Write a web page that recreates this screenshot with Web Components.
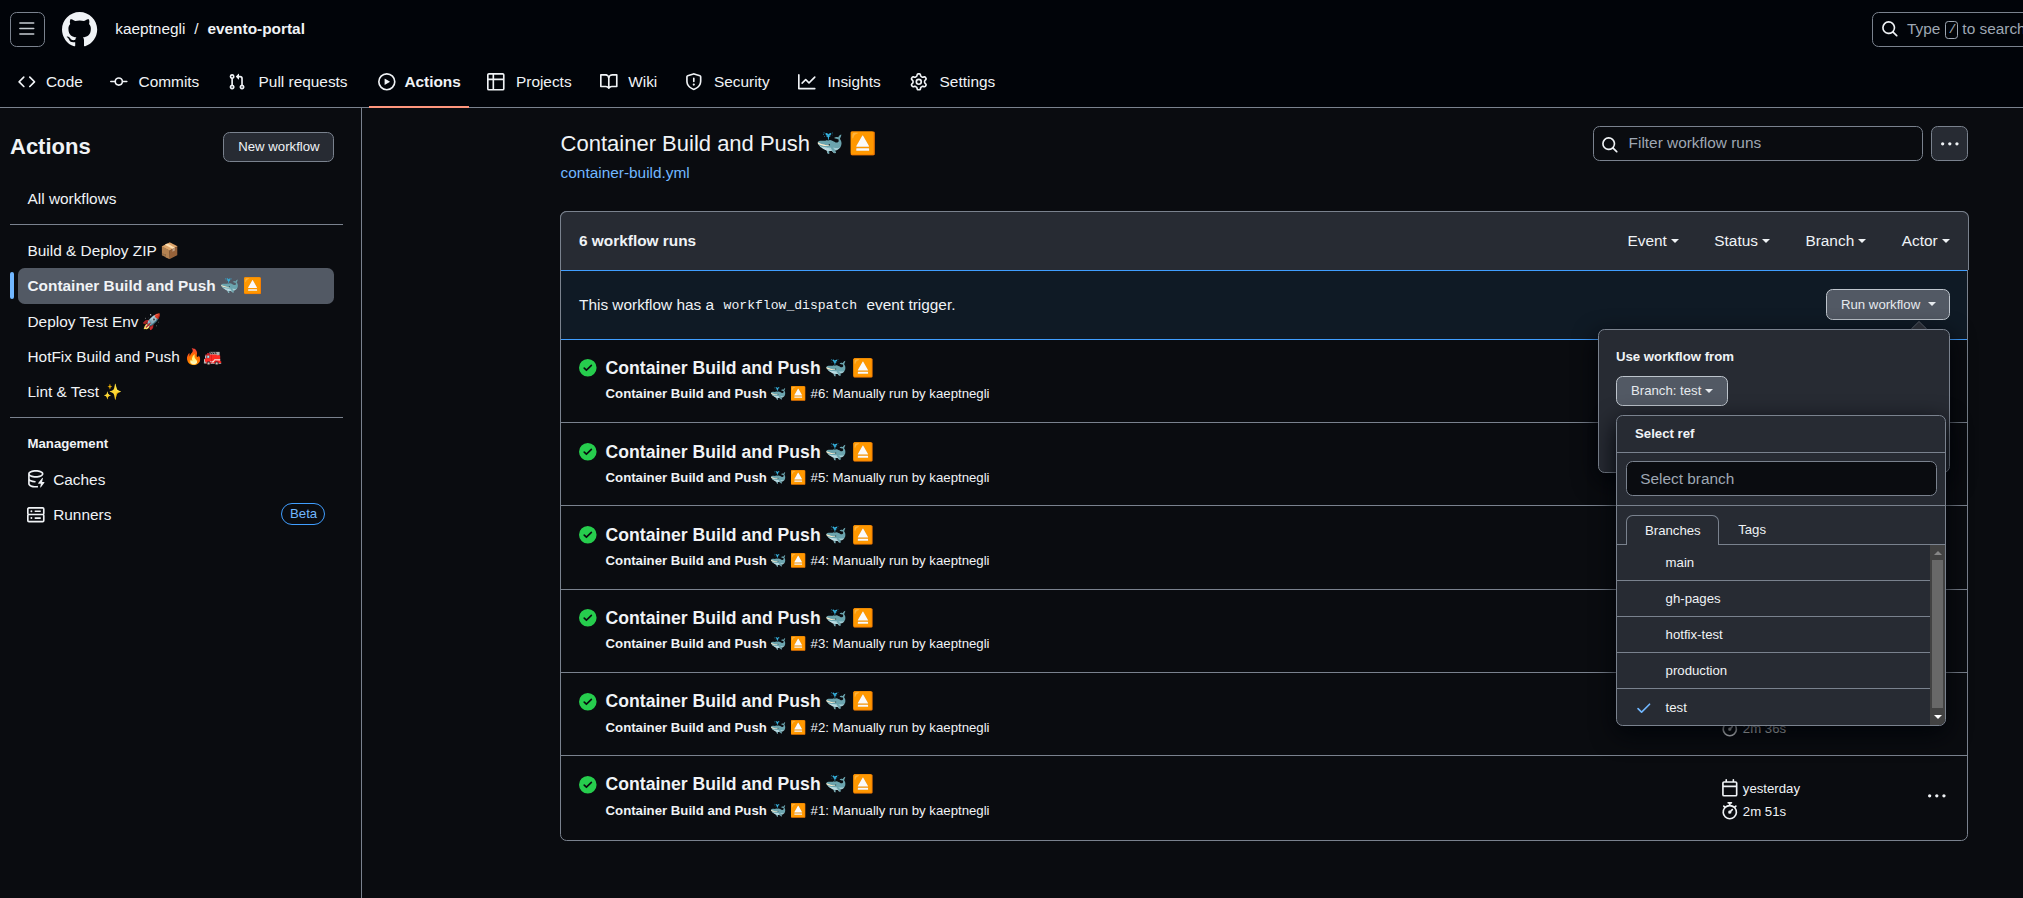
<!DOCTYPE html>
<html lang="en">
<head>
<meta charset="utf-8">
<title>Workflow runs · kaeptnegli/evento-portal</title>
<style>
  html, body { margin: 0; height: 100%; overflow: hidden; background: #0a0c10; }
  body {
    --line: #7a828e; --fg: #f0f3f6; --muted: #9ea7b3; --subtle: #272b33;
    --hover: #525964; --accent: #71b7ff; --accent-line: #409eff;
    color: var(--fg); font: 15.4px/23.1px "Liberation Sans", Arial, "Noto Color Emoji", sans-serif;
  }
</style>
</head>
<body>
<evento-app></evento-app>
<script>
const ICONS = {
  code: '<path d="m11.28 3.22 4.25 4.25a.75.75 0 0 1 0 1.06l-4.25 4.25a.749.749 0 0 1-1.275-.326.749.749 0 0 1 .215-.734L13.94 8l-3.72-3.72a.749.749 0 0 1 .326-1.275.749.749 0 0 1 .734.215Zm-6.56 0a.751.751 0 0 1 1.042.018.751.751 0 0 1 .018 1.042L2.06 8l3.72 3.72a.749.749 0 0 1-.326 1.275.749.749 0 0 1-.734-.215L.47 8.53a.75.75 0 0 1 0-1.06Z"/>',
  commit: '<path d="M11.93 8.5a4.002 4.002 0 0 1-7.86 0H.75a.75.75 0 0 1 0-1.5h3.32a4.002 4.002 0 0 1 7.86 0h3.32a.75.75 0 0 1 0 1.5Zm-1.43-.75a2.5 2.5 0 1 0-5 0 2.5 2.5 0 0 0 5 0Z"/>',
  pull: '<path d="M1.5 3.25a2.25 2.25 0 1 1 3 2.122v5.256a2.251 2.251 0 1 1-1.5 0V5.372A2.25 2.25 0 0 1 1.5 3.25Zm5.677-.177L9.573.677A.25.25 0 0 1 10 .854V2.5h1A2.5 2.5 0 0 1 13.5 5v5.628a2.251 2.251 0 1 1-1.5 0V5a1 1 0 0 0-1-1h-1v1.646a.25.25 0 0 1-.427.177L7.177 3.427a.25.25 0 0 1 0-.354ZM3.75 2.5a.75.75 0 1 0 0 1.5.75.75 0 0 0 0-1.5Zm0 9.5a.75.75 0 1 0 0 1.5.75.75 0 0 0 0-1.5Zm8.25.75a.75.75 0 1 0 1.5 0 .75.75 0 0 0-1.5 0Z"/>',
  play: '<path d="M8 0a8 8 0 1 1 0 16A8 8 0 0 1 8 0ZM1.5 8a6.5 6.5 0 1 0 13 0 6.5 6.5 0 0 0-13 0Zm4.879-2.773 4.264 2.559a.25.25 0 0 1 0 .428l-4.264 2.559A.25.25 0 0 1 6 10.559V5.442a.25.25 0 0 1 .379-.215Z"/>',
  table: '<path d="M0 1.75C0 .784.784 0 1.75 0h12.5C15.216 0 16 .784 16 1.75v12.5A1.75 1.75 0 0 1 14.25 16H1.75A1.75 1.75 0 0 1 0 14.25ZM6.5 6.5v8h7.75a.25.25 0 0 0 .25-.25V6.5Zm8-1.5V1.75a.25.25 0 0 0-.25-.25H6.5V5Zm-13 1.5v7.75c0 .138.112.25.25.25H5v-8ZM5 5V1.5H1.75a.25.25 0 0 0-.25.25V5Z"/>',
  book: '<path d="M0 1.75A.75.75 0 0 1 .75 1h4.253c1.227 0 2.317.59 3 1.501A3.743 3.743 0 0 1 11.006 1h4.245a.75.75 0 0 1 .75.75v10.5a.75.75 0 0 1-.75.75h-4.507a2.25 2.25 0 0 0-1.591.659l-.622.621a.75.75 0 0 1-1.06 0l-.622-.621A2.25 2.25 0 0 0 5.258 13H.75a.75.75 0 0 1-.75-.75Zm7.251 10.324.004-5.073-.002-2.253A2.25 2.25 0 0 0 5.003 2.5H1.5v9h3.757a3.75 3.75 0 0 1 1.994.574ZM8.755 4.75l-.004 7.322a3.752 3.752 0 0 1 1.992-.572H14.5v-9h-3.495a2.25 2.25 0 0 0-2.25 2.25Z"/>',
  shield: '<path d="M7.467.133a1.748 1.748 0 0 1 1.066 0l5.25 1.68A1.75 1.75 0 0 1 15 3.48V7c0 1.566-.32 3.182-1.303 4.682-.983 1.498-2.585 2.813-5.032 3.855a1.697 1.697 0 0 1-1.33 0c-2.447-1.042-4.049-2.357-5.032-3.855C1.32 10.182 1 8.566 1 7V3.48a1.75 1.75 0 0 1 1.217-1.667Zm.61 1.429a.25.25 0 0 0-.153 0l-5.25 1.68a.25.25 0 0 0-.174.238V7c0 1.358.275 2.666 1.057 3.86.784 1.194 2.121 2.34 4.366 3.297a.196.196 0 0 0 .154 0c2.245-.956 3.582-2.104 4.366-3.298C13.225 9.666 13.5 8.36 13.5 7V3.48a.251.251 0 0 0-.174-.237l-5.25-1.68ZM8.75 4.75v3a.75.75 0 0 1-1.5 0v-3a.75.75 0 0 1 1.5 0ZM9 10.5a1 1 0 1 1-2 0 1 1 0 0 1 2 0Z"/>',
  graph: '<path d="M1.5 1.75V13.5h13.75a.75.75 0 0 1 0 1.5H.75a.75.75 0 0 1-.75-.75V1.75a.75.75 0 0 1 1.5 0Zm14.28 2.53-5.25 5.25a.75.75 0 0 1-1.06 0L7 7.06 4.28 9.78a.751.751 0 0 1-1.042-.018.751.751 0 0 1-.018-1.042l3.25-3.25a.75.75 0 0 1 1.06 0L10 7.94l4.72-4.72a.751.751 0 0 1 1.042.018.751.751 0 0 1 .018 1.042Z"/>',
  gear: '<path d="M8 0a8.2 8.2 0 0 1 .701.031C9.444.095 9.99.645 10.16 1.29l.288 1.107c.018.066.079.158.212.224.231.114.454.243.668.386.123.082.233.09.299.071l1.103-.303c.644-.176 1.392.021 1.82.63.27.385.506.792.704 1.218.315.675.111 1.422-.364 1.891l-.814.806c-.049.048-.098.147-.088.294.016.257.016.515 0 .772-.01.147.038.246.088.294l.814.806c.475.469.679 1.216.364 1.891a7.977 7.977 0 0 1-.704 1.217c-.428.61-1.176.807-1.82.63l-1.102-.302c-.067-.019-.177-.011-.3.071a5.909 5.909 0 0 1-.668.386c-.133.066-.194.158-.211.224l-.29 1.106c-.168.646-.715 1.196-1.458 1.26a8.006 8.006 0 0 1-1.402 0c-.743-.064-1.289-.614-1.458-1.26l-.289-1.106c-.018-.066-.079-.158-.212-.224a5.738 5.738 0 0 1-.668-.386c-.123-.082-.233-.09-.299-.071l-1.103.303c-.644.176-1.392-.021-1.82-.63a8.12 8.12 0 0 1-.704-1.218c-.315-.675-.111-1.422.363-1.891l.815-.806c.05-.048.098-.147.088-.294a6.214 6.214 0 0 1 0-.772c.01-.147-.038-.246-.088-.294l-.815-.806C.635 6.045.431 5.298.746 4.623a7.92 7.92 0 0 1 .704-1.217c.428-.61 1.176-.807 1.82-.63l1.102.302c.067.019.177.011.3-.071.214-.143.437-.272.668-.386.133-.066.194-.158.211-.224l.29-1.106C6.009.645 6.556.095 7.299.03 7.53.01 7.764 0 8 0Zm-.571 1.525c-.036.003-.108.036-.137.146l-.289 1.105c-.147.561-.549.967-.998 1.189-.173.086-.34.183-.5.29-.417.278-.97.423-1.529.27l-1.103-.303c-.109-.03-.175.016-.195.045-.22.312-.412.644-.573.99-.014.031-.021.11.059.19l.815.806c.411.406.562.957.53 1.456a4.709 4.709 0 0 0 0 .582c.032.499-.119 1.05-.53 1.456l-.815.806c-.081.08-.073.159-.059.19.162.346.353.677.573.989.02.03.085.076.195.046l1.102-.303c.56-.153 1.113-.008 1.53.27.161.107.328.204.501.29.447.222.85.629.997 1.189l.289 1.105c.029.109.101.143.137.146a6.6 6.6 0 0 0 1.142 0c.036-.003.108-.036.137-.146l.289-1.105c.147-.561.549-.967.998-1.189.173-.086.34-.183.5-.29.417-.278.97-.423 1.529-.27l1.103.303c.109.029.175-.016.195-.045.22-.313.411-.644.573-.99.014-.031.021-.11-.059-.19l-.815-.806c-.411-.406-.562-.957-.53-1.456a4.709 4.709 0 0 0 0-.582c-.032-.499.119-1.05.53-1.456l.815-.806c.081-.08.073-.159.059-.19a6.464 6.464 0 0 0-.573-.989c-.02-.03-.085-.076-.195-.046l-1.102.303c-.56.153-1.113.008-1.53-.27a4.44 4.44 0 0 0-.501-.29c-.447-.222-.85-.629-.997-1.189l-.289-1.105c-.029-.11-.101-.143-.137-.146a6.6 6.6 0 0 0-1.142 0ZM11 8a3 3 0 1 1-6 0 3 3 0 0 1 6 0ZM9.5 8a1.5 1.5 0 1 0-3.001.001A1.5 1.5 0 0 0 9.5 8Z"/>',
  bars: '<path d="M1 2.75A.75.75 0 0 1 1.75 2h12.5a.75.75 0 0 1 0 1.5H1.75A.75.75 0 0 1 1 2.75Zm0 5A.75.75 0 0 1 1.75 7h12.5a.75.75 0 0 1 0 1.5H1.75A.75.75 0 0 1 1 7.75ZM1.75 12h12.5a.75.75 0 0 1 0 1.5H1.75a.75.75 0 0 1 0-1.5Z"/>',
  mark: '<path d="M8 0c4.42 0 8 3.58 8 8a8.013 8.013 0 0 1-5.45 7.59c-.4.08-.55-.17-.55-.38 0-.27.01-1.13.01-2.2 0-.75-.25-1.23-.54-1.48 1.78-.2 3.65-.88 3.65-3.95 0-.88-.31-1.59-.82-2.15.08-.2.36-1.02-.08-2.12 0 0-.67-.22-2.2.82-.64-.18-1.32-.27-2-.27-.68 0-1.36.09-2 .27-1.53-1.03-2.2-.82-2.2-.82-.44 1.1-.16 1.92-.08 2.12-.51.56-.82 1.28-.82 2.15 0 3.06 1.86 3.75 3.64 3.95-.23.2-.44.55-.51 1.07-.46.21-1.61.55-2.33-.66-.15-.24-.6-.83-1.23-.82-.67.01-.27.38.01.53.34.19.73.9.82 1.13.16.45.68 1.31 2.69.94 0 .67.01 1.3.01 1.49 0 .21-.15.45-.55.38A7.995 7.995 0 0 1 0 8c0-4.42 3.58-8 8-8Z"/>',
  search: '<path d="M10.68 11.74a6 6 0 0 1-7.922-8.982 6 6 0 0 1 8.982 7.922l3.04 3.04a.749.749 0 0 1-.326 1.275.749.749 0 0 1-.734-.215ZM11.5 7a4.499 4.499 0 1 0-8.997 0A4.499 4.499 0 0 0 11.5 7Z"/>',
  kebab: '<circle cx="1.5" cy="8" r="1.5"/><circle cx="8" cy="8" r="1.5"/><circle cx="14.5" cy="8" r="1.5"/>',
  success: '<path d="M8 16A8 8 0 1 1 8 0a8 8 0 0 1 0 16Zm3.78-9.72a.751.751 0 0 0-.018-1.042.751.751 0 0 0-1.042-.018L6.75 9.19 5.28 7.72a.751.751 0 0 0-1.042.018.751.751 0 0 0-.018 1.042l2 2a.75.75 0 0 0 1.06 0Z"/>',
  check: '<path d="M13.78 4.22a.75.75 0 0 1 0 1.06l-7.25 7.25a.75.75 0 0 1-1.06 0L2.22 9.28a.751.751 0 0 1 .018-1.042.751.751 0 0 1 1.042-.018L6 10.94l6.72-6.72a.75.75 0 0 1 1.06 0Z"/>',
  calendar: '<path d="M4.75 0a.75.75 0 0 1 .75.75V2h5V.75a.75.75 0 0 1 1.5 0V2h1.25c.966 0 1.75.784 1.75 1.75v10.5A1.75 1.75 0 0 1 13.25 16H2.75A1.75 1.75 0 0 1 1 14.25V3.75C1 2.784 1.784 2 2.75 2H4V.75A.75.75 0 0 1 4.75 0ZM2.5 7.5v6.75c0 .138.112.25.25.25h10.5a.25.25 0 0 0 .25-.25V7.5Zm10.75-4H2.75a.25.25 0 0 0-.25.25V6h11V3.75a.25.25 0 0 0-.25-.25Z"/>',
  stopwatch: '<path d="M5.75.75A.75.75 0 0 1 6.5 0h3a.75.75 0 0 1 0 1.5h-.75v1l-.001.041a6.724 6.724 0 0 1 3.464 1.435l.007-.006.75-.75a.749.749 0 0 1 1.275.326.749.749 0 0 1-.215.734l-.75.75-.006.007a6.75 6.75 0 1 1-10.548 0L2.72 5.03l-.75-.75a.751.751 0 0 1 .018-1.042.751.751 0 0 1 1.042-.018l.75.75.007.006A6.72 6.72 0 0 1 7.25 2.541V1.5H6.5a.75.75 0 0 1-.75-.75ZM8 14.5a5.25 5.25 0 1 0-.001-10.501A5.25 5.25 0 0 0 8 14.5Zm.389-6.7 1.33-1.33a.75.75 0 1 1 1.061 1.06L9.45 8.861A1.503 1.503 0 0 1 8 10.75a1.499 1.499 0 1 1 .389-2.95Z"/>',
  cache: '<path d="M2.5 5.724V8c0 .248.238.7 1.169 1.159.874.43 2.144.745 3.62.822a.75.75 0 1 1-.078 1.498c-1.622-.085-3.102-.432-4.204-.975a5.565 5.565 0 0 1-.507-.28V12.5c0 .133.058.318.282.551.227.237.591.483 1.101.707 1.015.447 2.47.742 4.117.742.406 0 .802-.018 1.183-.052a.751.751 0 1 1 .134 1.494C8.89 15.98 8.45 16 8 16c-1.805 0-3.475-.32-4.721-.869-.623-.274-1.173-.619-1.579-1.041-.408-.425-.7-.964-.7-1.59v-9c0-.626.292-1.165.7-1.591.406-.42.956-.766 1.579-1.04C4.525.32 6.195 0 8 0c1.806 0 3.476.32 4.721.869.623.274 1.173.619 1.579 1.041.408.425.7.964.7 1.59 0 .626-.292 1.165-.7 1.591-.406.42-.956.766-1.578 1.04C11.475 6.68 9.805 7 8 7c-1.805 0-3.475-.32-4.721-.869a6.15 6.15 0 0 1-.779-.407Zm0-2.224c0 .133.058.318.282.551.227.237.591.483 1.101.707C4.898 5.205 6.353 5.5 8 5.5c1.646 0 3.101-.295 4.118-.742.508-.224.873-.471 1.1-.708.224-.232.282-.417.282-.55 0-.133-.058-.318-.282-.551-.227-.237-.591-.483-1.101-.707C11.102 1.795 9.647 1.5 8 1.5c-1.646 0-3.101.295-4.118.742-.508.224-.873.471-1.1.708-.224.232-.282.417-.282.55Z"/><path d="M14.49 7.582a.375.375 0 0 0-.66-.313l-3.625 4.625a.375.375 0 0 0 .295.606h2.127l-.619 2.922a.375.375 0 0 0 .666.304l3.125-4.125A.375.375 0 0 0 15.5 11h-1.778l.769-3.418Z"/>',
  server: '<path fill="none" stroke="currentColor" stroke-width="1.5" d="M1.75 1.75h12.5a1 1 0 0 1 1 1v4a1 1 0 0 1-1 1H1.75a1 1 0 0 1-1-1v-4a1 1 0 0 1 1-1ZM1.75 7.75h12.5a1 1 0 0 1 1 1v4.5a1 1 0 0 1-1 1H1.75a1 1 0 0 1-1-1v-4.5a1 1 0 0 1 1-1ZM7 4.75h5.5M7 11h5.5"/><circle cx="4" cy="4.75" r=".9"/><circle cx="4" cy="11" r=".9"/>'
};

function define(tag, css, html) {
  customElements.define(tag, class extends HTMLElement {
    connectedCallback() {
      if (this.shadowRoot) return;
      const t = document.createElement('template');
      t.innerHTML = '<style>' + css + '</style>' + (typeof html === 'function' ? html(this) : html);
      this.attachShadow({ mode: 'open' }).append(t.content.cloneNode(true));
    }
  });
}

define('gh-icon', `
  :host { display: block; flex: none; width: var(--size, 17.6px); height: var(--size, 17.6px); }
  svg { display: block; width: 100%; height: 100%; fill: currentColor; overflow: visible; }`,
  el => `<svg viewBox="0 0 16 16">${ICONS[el.getAttribute('name')]}</svg>`);

define('gh-caret', `
  :host { display: block; flex: none; width: 0; height: 0; border: 4.4px solid transparent;
    border-top-color: currentColor; border-bottom: 0; }`, '');

define('gh-button', `
  :host { display: flex; align-items: center; box-sizing: border-box; height: 30.8px; padding: 0 13.4px 0 14px;
    border: 1px solid var(--line); border-radius: 6.6px; background: var(--subtle);
    font-size: 13.2px; white-space: nowrap; }
  :host([active]) { background: var(--hover); border-color: #bdc4cc; color: #e6eaee; }`, '<slot></slot>');

define('nav-tab', `
  :host { display: flex; align-items: center; box-sizing: border-box; height: 51px; padding: 0 0 2px 9px;
    white-space: nowrap; position: relative; }
  :host([current]) { font-weight: bold; }
  :host([current])::after { content: ""; position: absolute; left: 0; right: 0; bottom: 0; height: 2px; background: #ff967d; }
  .label { margin-left: var(--gap, 10.4px); }`,
  el => `<gh-icon name="${el.getAttribute('icon')}"></gh-icon><span class="label"><slot></slot></span>`);

define('gh-header', `
  :host { display: block; box-sizing: border-box; height: 108px; background: #010409; border-bottom: 1px solid var(--line); }
  .top { display: flex; align-items: center; height: 35px; padding: 12px 0 0 10px; }
  .menu { display: flex; align-items: center; justify-content: center; box-sizing: border-box; width: 35px; height: 35px;
    padding: 0 1px 1.6px 0; border: 1px solid var(--line); border-radius: 6.6px; color: #c6ccd2; }
  .logo { --size: 35.2px; margin: 0 18px 0 17px; }
  .crumb { display: flex; gap: 8.9px; height: 23px; margin-top: -2px; }
  .search { display: flex; align-items: center; box-sizing: border-box; width: 300px; height: 35px; margin-left: auto;
    margin-right: -149px; border: 1px solid var(--line); border-radius: 6.6px; padding: 0 0 1.4px 8px; color: var(--muted); white-space: nowrap; }
  .search gh-icon { color: var(--fg); margin-right: 8.4px; }
  kbd { box-sizing: border-box; width: 13px; height: 18px; border: 1px solid currentColor; border-radius: 3.3px; margin: 2px 4px 0 5px;
    font: 13.2px/15px "Liberation Mono", monospace; text-align: center; text-indent: 1px; }
  nav { display: flex; height: 51px; padding: 9px 0 0 9px; }
  nav-tab { margin-top: 1px; }`, `
  <div class="top">
    <div class="menu"><gh-icon name="bars"></gh-icon></div>
    <gh-icon class="logo" name="mark"></gh-icon>
    <div class="crumb"><span>kaeptnegli</span><span>/</span><b>evento-portal</b></div>
    <div class="search"><gh-icon name="search"></gh-icon><span>Type</span><kbd>/</kbd><span>to search</span></div>
  </div>
  <nav>
    <nav-tab icon="code" style="width:92px">Code</nav-tab>
    <nav-tab icon="commit" style="width:118px;--gap:11px">Commits</nav-tab>
    <nav-tab icon="pull" style="width:150px;--gap:13px">Pull requests</nav-tab>
    <nav-tab icon="play" current style="width:100px;margin-right:9px;--gap:8.8px">Actions</nav-tab>
    <nav-tab icon="table" style="width:113px;--gap:11.4px">Projects</nav-tab>
    <nav-tab icon="book" style="width:85px;--gap:10.6px">Wiki</nav-tab>
    <nav-tab icon="shield" style="width:113px;--gap:11.4px">Security</nav-tab>
    <nav-tab icon="graph" style="width:112px;--gap:12px">Insights</nav-tab>
    <nav-tab icon="gear" style="--gap:12px">Settings</nav-tab>
  </nav>`);

define('side-link', `
  :host { display: flex; align-items: center; box-sizing: border-box; height: 35.2px; margin: 0 9px 0 8px; padding-left: 9.5px;
    border-radius: 6.6px; white-space: nowrap; position: relative; }
  :host([current]) { background: var(--hover); font-weight: bold; }
  :host([current])::before { content: ""; position: absolute; left: -8px; top: 4px; width: 4px; height: 27px; border-radius: 2px; background: var(--accent); }
  gh-icon { margin: 0 8.6px 0 -.5px; }
  ::slotted(.beta) { margin: 0 9px 0 auto; box-sizing: border-box; height: 22px; width: 44px; padding-left: 8px; border: 1px solid var(--accent-line);
    border-radius: 11px; color: var(--accent); font-size: 13.2px; line-height: 20px; }`,
  el => (el.hasAttribute('icon') ? `<gh-icon name="${el.getAttribute('icon')}"></gh-icon>` : '') + '<slot></slot>');

define('side-bar', `
  :host { display: block; box-sizing: border-box; width: 362px; flex: none; padding: 24px 18px 0 10px; border-right: 1px solid var(--line); }
  .head { display: flex; align-items: center; justify-content: space-between; margin: 0 9px 19px 0; height: 30px; }
  h2 { margin: 0; padding-bottom: 0; font-size: 22px; line-height: 28px; }
  hr { height: 1px; border: 0; margin: 8px 0 8px; background: var(--line); }
  h3 { margin: 0; padding-left: 17.5px; font-size: 13.2px; line-height: 35.4px; }`, `
  <div class="head"><h2>Actions</h2><gh-button>New workflow</gh-button></div>
  <side-link>All workflows</side-link>
  <hr>
  <side-link>Build &amp; Deploy ZIP 📦</side-link>
  <side-link current>Container Build and Push 🐳 ⏏️</side-link>
  <side-link>Deploy Test Env 🚀</side-link>
  <side-link>HotFix Build and Push 🔥🚒</side-link>
  <side-link>Lint &amp; Test ✨</side-link>
  <hr>
  <h3>Management</h3>
  <side-link icon="cache">Caches</side-link>
  <side-link icon="server">Runners<span class="beta">Beta</span></side-link>`);

define('run-row', `
  :host { display: flex; box-sizing: border-box; height: 83.2px; padding: 14.6px 21px 0 18px; border-bottom: 1px solid var(--line); white-space: nowrap; }
  :host(:not(:first-of-type)) .main, :host(:not(:first-of-type)) .status { position: static; transform: none; padding-top: .9px; }
  :host(:last-of-type) { border-bottom: 0; }
  .status { margin: 4.4px 9px 0 0; color: #26cd4d; }
  .title { font-size: 17.6px; line-height: 26.4px; font-weight: bold; }
  .sub { font-size: 13.2px; line-height: 26px; }
  .meta { width: 207.2px; margin-left: auto; font-size: 13.2px; }
  .meta div { display: flex; align-items: center; height: 23.6px; gap: 4px; }
  .meta div:first-child { margin-top: 5px; }
  .meta span { padding-top: 2px; }
  .more { margin-top: 16.4px; }`,
  el => `<gh-icon class="status" name="success"></gh-icon>
  <div class="main"><div class="title">Container Build and Push 🐳 ⏏️</div>
  <div class="sub"><b>Container Build and Push 🐳 ⏏️</b> #${el.getAttribute('number')}: Manually run by kaeptnegli</div></div>
  ${el.hasAttribute('time') ? `<div class="meta"><div><gh-icon name="calendar"></gh-icon><span>yesterday</span></div>
  <div><gh-icon name="stopwatch"></gh-icon><span>${el.getAttribute('time')}</span></div></div>
  <gh-icon class="more" name="kebab"></gh-icon>` : ''}`);

define('branch-item', `
  :host { display: flex; align-items: center; box-sizing: border-box; height: 36.2px; padding-left: 18px; border-bottom: 1px solid var(--line); font-size: 13.2px; }
  :host(:last-of-type) { border-bottom: 0; }
  gh-icon, i { width: 17.6px; margin-right: 13px; color: var(--accent); }`,
  el => (el.hasAttribute('checked') ? '<gh-icon name="check"></gh-icon>' : '<i></i>') + '<span><slot></slot></span>');

define('ref-menu', `
  :host { display: block; box-sizing: border-box; width: 330px; height: 311px; background: var(--subtle); border: 1px solid var(--line);
    border-radius: 6.6px; box-shadow: 0 8px 24px #010409; font-size: 13.2px; overflow: hidden; }
  h4 { margin: 0; padding: 0 18px; height: 36px; line-height: 36px; border-bottom: 1px solid var(--line); font-size: 13.2px; }
  .filter { padding: 8px 8px 8px 9px; height: 36px; border-bottom: 1px solid var(--line); }
  .field { box-sizing: border-box; height: 35px; border: 1px solid var(--line); border-radius: 6.6px; background: #0a0c10;
    padding-left: 13.2px; font-size: 15.4px; line-height: 34px; color: var(--muted); }
  .tabs { display: flex; box-sizing: border-box; height: 39px; padding: 9px 0 0 9px; border-bottom: 1px solid var(--line); line-height: 29px; }
  .tabs .on { box-sizing: border-box; width: 93px; height: 30px; padding-left: 18px; border: 1px solid var(--line); border-bottom: 0;
    border-radius: 6.6px 6.6px 0 0; background: var(--subtle); }
  .tabs .off { padding-left: 19.2px; }
  .body { display: flex; height: 180px; }
  .list { flex: 1; }
  .bar { width: 15px; background: #424242; display: flex; flex-direction: column; align-items: center; }
  .bar i { width: 0; height: 0; border: 4px solid transparent; }
  .up { border-top: 0 !important; border-bottom-color: #868686 !important; margin: 6px 0 5px; }
  .down { border-bottom: 0 !important; border-top-color: #fff !important; margin-top: 7px; }
  .thumb { width: 11px; height: 148px; background: #686868; }`, `
  <h4>Select ref</h4>
  <div class="filter"><div class="field">Select branch</div></div>
  <div class="tabs"><div class="on">Branches</div><div class="off">Tags</div></div>
  <div class="body"><div class="list">
    <branch-item>main</branch-item><branch-item>gh-pages</branch-item><branch-item>hotfix-test</branch-item>
    <branch-item>production</branch-item><branch-item checked>test</branch-item>
  </div><div class="bar"><i class="up"></i><div class="thumb"></div><i class="down"></i></div></div>`);

define('run-popover', `
  :host { display: block; box-sizing: border-box; width: 352px; height: 144px; padding: 17px; background: var(--subtle);
    border: 1px solid var(--line); border-radius: 6.6px; box-shadow: 0 8px 24px #010409; font-size: 13.2px; }
  .tip { position: absolute; right: 22px; top: -9px; width: 16px; height: 8px; overflow: visible; }
  b { display: block; line-height: 20px; margin-bottom: 9px; }
  gh-button { width: 112px; gap: 4px; }
  ref-menu { position: absolute; left: 17px; top: 85px; }`, `
  <svg class="tip" viewBox="0 0 16 8"><path d="M.3 8 8 .5 15.7 8" fill="#272b33" stroke="#4b515b"/></svg>
  <b>Use workflow from</b>
  <gh-button active>Branch: test<gh-caret></gh-caret></gh-button>
  <ref-menu></ref-menu>`);

define('runs-box', `
  :host { display: block; box-sizing: border-box; width: 1408px; height: 630px; border: 1px solid var(--line); border-radius: 6.6px; }
  header { display: flex; align-items: center; box-sizing: border-box; width: 1409px; height: 59px; margin: -1px 0 0 -1px; padding: 0 18.4px 1px 18px;
    border: 1px solid var(--line); border-bottom: 0; border-radius: 6.6px 6.6px 0 0; background: var(--subtle); }
  header b { margin-right: auto; }
  .f { display: flex; align-items: center; gap: 4px; margin-left: 35.5px; }
  .banner { display: flex; align-items: center; justify-content: space-between; box-sizing: border-box; height: 70px; padding: 0 17px 0 18px;
    background: #0f1a25; border: solid var(--accent-line); border-width: 1px 0; }
  code { font: 13.09px "Liberation Mono", monospace; padding: 0 5.2px; position: relative; top: -1px; }
  .drop { position: relative; z-index: 2; top: -.6px; }
  .drop gh-button { width: 124px; gap: 7.8px; }
  run-popover { position: absolute; right: 0; top: 39.6px; }`, `
  <header><b>6 workflow runs</b>
    <span class="f">Event<gh-caret></gh-caret></span><span class="f">Status<gh-caret></gh-caret></span>
    <span class="f">Branch<gh-caret></gh-caret></span><span class="f">Actor<gh-caret></gh-caret></span></header>
  <div class="banner"><span>This workflow has a <code>workflow_dispatch</code> event trigger.</span>
    <div class="drop"><gh-button active>Run workflow<gh-caret></gh-caret></gh-button><run-popover></run-popover></div></div>
  <run-row number="6"></run-row><run-row number="5"></run-row><run-row number="4"></run-row>
  <run-row number="3"></run-row><run-row number="2" time="2m 36s"></run-row><run-row number="1" time="2m 51s"></run-row>`);

define('workflow-page', `
  :host { display: block; padding: 18px 0 0 198px; }
  .head { display: flex; width: 1408px; height: 85px; }
  h1 { margin: 0; padding: 1px 0 0 .6px; font-size: 22px; line-height: 33px; font-weight: normal; white-space: nowrap; }
  .file { color: var(--accent); line-height: 25px; padding-left: .6px; }
  .filter { display: flex; align-items: center; box-sizing: border-box; width: 330px; height: 35px; margin: 0 8px 0 auto;
    border: 1px solid var(--line); border-radius: 6.6px; padding: 0 0 1px 7.4px; color: var(--muted); }
  .filter gh-icon { color: var(--fg); margin: 3.6px 9.6px 0 0; }
  gh-button { width: 37px; height: 35px; padding: 0; justify-content: center; }`, `
  <div class="head"><div><h1>Container Build and Push 🐳 ⏏️</h1><div class="file">container-build.yml</div></div>
    <div class="filter"><gh-icon name="search"></gh-icon>Filter workflow runs</div>
    <gh-button><gh-icon name="kebab"></gh-icon></gh-button></div>
  <runs-box></runs-box>`);

define('evento-app', `
  :host { display: flex; flex-direction: column; height: 898px; overflow: hidden; }
  main { display: flex; flex: 1; }`, `
  <gh-header></gh-header><main><side-bar></side-bar><workflow-page></workflow-page></main>`);
</script>
</body>
</html>
